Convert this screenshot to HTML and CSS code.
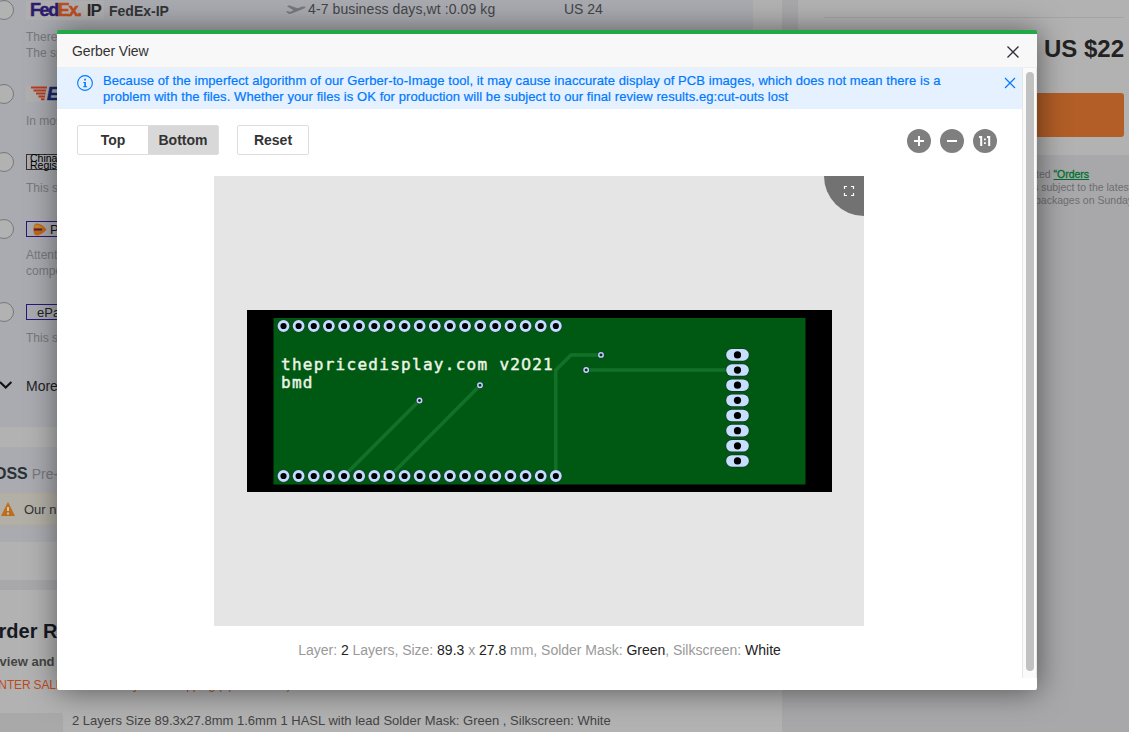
FILE: index.html
```
<!DOCTYPE html>
<html lang="en">
<head>
<meta charset="utf-8">
<title>Gerber View</title>
<link rel="stylesheet" href="styles.css">
</head>
<body>
<div class="page">
  <main class="main">
    <section class="panel shipping">
      <div class="shipping-list">
        <div class="ship ship-fedex">
          <i class="radio"></i>
          <div class="ship-body">
            <div class="ship-head">
              <span class="logo fedex"><b class="fed">Fed</b><b class="ex">Ex</b><b class="dot">.</b><b class="ip">IP</b></span>
              <b class="ship-name">FedEx-IP</b>
              <svg class="plane" width="20" height="12" viewBox="0 0 20 12"><path d="M0 7.500l1.600-.4L4 8l3.500-1.700L1 2.200 3 1.300l8.500 2.900 4.500-1.500c2-.5 4 .1 3.200 1.100-.4.500-2 1.200-3.500 1.700L5 9.700H2.500z"/></svg>
              <span class="days">4-7 business days,wt :0.09 kg</span>
              <span class="price">US 24</span>
            </div>
            <p class="note">There<br>The sp</p>
          </div>
        </div>
        <div class="ship ship-ems">
          <i class="radio"></i>
          <div class="ship-body">
            <div class="ship-head"><span class="logo ems"><svg width="16" height="16" viewBox="0 0 16 16"><path d="M0 1.500h16M2.500 4.500h12.500M5 7.500h9.500M7.500 10.500h6.500M10 13.300h3.500" stroke="#b83d20" stroke-width="2.100"/></svg><b>EMS</b></span></div>
            <p class="note">In most</p>
          </div>
        </div>
        <div class="ship ship-china">
          <i class="radio"></i>
          <div class="ship-body">
            <div class="ship-head"><span class="logo china">China<br>Registered</span></div>
            <p class="note">This s</p>
          </div>
        </div>
        <div class="ship ship-post">
          <i class="radio"></i>
          <div class="ship-body">
            <div class="ship-head"><span class="logo boxed"><svg width="14" height="13" viewBox="0 0 14 13"><path d="M2 1C5-.5 10 2 13.500 6.500 10 11 5 13.500 2 12-.2 9-.2 4 2 1z" fill="#c3651b"/><path d="M2 2c3-1 6 .5 8 3H1z" fill="#cc8429"/><path d="M1 6.500h8" stroke="#4b2830" stroke-width="2"/></svg>PostNL</span></div>
            <p class="note">Attent<br>compe</p>
          </div>
        </div>
        <div class="ship ship-epacket">
          <i class="radio"></i>
          <div class="ship-body">
            <div class="ship-head"><span class="logo boxed epacket">ePacket</span></div>
            <p class="note">This s</p>
          </div>
        </div>
        <div class="more"><svg width="14" height="10" viewBox="0 0 14 10"><path d="M0 1l5.700 5.500L11.400 1" fill="none" stroke="#111" stroke-width="2"/></svg><span>More</span></div>
      </div>
      <div class="ioss">
        <div class="ioss-title"><b>OSS</b> Pre-</div>
        <div class="ioss-alert"><svg width="14" height="14" viewBox="0 0 14 14"><path d="M7 0l7 14H0z" fill="#bd6d1c"/><path d="M7 5v4M7 10.500v2" stroke="#c9c4b5" stroke-width="2"/></svg><span>Our n</span></div>
      </div>
    </section>
    <section class="panel review">
      <h2>Order R</h2>
      <p class="review-sub">Review and</p>
      <p class="sale"><span>WINTER SALE</span><span>&nbsp; C- 2021 Only Free Shipping (up to $20.00)</span></p>
      <div class="item"><i class="thumb"></i><span>2 Layers Size 89.3x27.8mm 1.6mm 1 HASL with lead Solder Mask: Green , Silkscreen: White</span></div>
    </section>
  </main>
  <aside class="aside">
    <div class="summary">
      <div class="total">US $22</div>
      <div class="pay"></div>
    </div>
    <div class="terms"><p>ted <a>“Orders</a></p><p class="t2">s subject to the latest</p><p class="t3">packages on Sunday</p></div>
  </aside>
</div>

<div class="modal">
  <header class="modal-head">
    <span>Gerber View</span>
    <svg width="12" height="12" viewBox="0 0 12 12"><path d="M.5.5l11 11M11.500.5l-11 11" stroke="#303038" stroke-width="1.300"/></svg>
  </header>
  <div class="modal-body">
    <div class="content">
      <div class="notice">
        <svg class="info" width="16" height="16" viewBox="0 0 16 16"><circle cx="8" cy="8" r="7.400" fill="none" stroke="#0078ff" stroke-width="1.100"/><path d="M7.200 3.800h1.700v1.700H7.200zM6.300 7h2.600v4.200h1.200v1H6.200v-1h1.100V8h-1z" fill="#0078ff"/></svg>
        <p>Because of the imperfect algorithm of our Gerber-to-Image tool, it may cause inaccurate display of PCB images, which does not mean there is a<br>problem with the files. Whether your files is OK for production will be subject to our final review results.eg:cut-outs lost</p>
        <svg class="notice-close" width="12" height="12" viewBox="0 0 12 12"><path d="M1 1l10 10M11 1L1 11" stroke="#0078ff" stroke-width="1.200"/></svg>
      </div>
      <div class="toolbar">
        <div class="tabs"><span class="tab">Top</span><span class="tab active">Bottom</span></div>
        <span class="reset">Reset</span>
        <div class="zooms">
          <i><svg width="24" height="24"><path d="M12 7v10M7 12h10" stroke="#fff" stroke-width="2"/></svg></i>
          <i><svg width="24" height="24"><path d="M7 12h10" stroke="#fff" stroke-width="2"/></svg></i>
          <i><svg width="24" height="24"><path d="M6 8h2.200v9M14 8h2.200v9" fill="none" stroke="#fff" stroke-width="2"/><path d="M11 9.500h1.800v1.700H11zM11 13.300h1.800V15H11z" fill="#fff"/></svg></i>
        </div>
      </div>
      <div class="viewer">
        <svg class="board" width="585" height="182" viewBox="247 310 585 182">
          <defs>
            <g id="pad"><circle r="6.300" fill="#252a48"/><circle r="4.500" fill="#000" stroke="#c2dcfb" stroke-width="2.800"/></g>
            <g id="oval"><rect x="-11.900" y="-6.500" width="23.800" height="13" rx="6.400" fill="#183426"/><rect x="-11.300" y="-5.800" width="22.600" height="11.600" rx="5.600" fill="#c5dffc"/><circle r="3.600" fill="#000"/></g>
            <g id="via"><circle r="3.400" fill="#252f58"/><circle r="2.200" fill="#063419" stroke="#bed5f3" stroke-width="1.500"/></g>
          </defs>
          <rect x="247" y="310" width="585" height="182" fill="#000"/>
          <rect x="273.500" y="318" width="532" height="166.500" fill="#005912"/>
          <path d="M419.500 400.500L346 474M480 385.500L392 474M601 355h-30l-15.300 15.300V475M586 370h151" fill="none" stroke="#127129" stroke-width="3.600"/>
          <g id="pads"></g>
          <g id="silk" class="silk"></g>
        </svg>
        <span class="fullscreen"><svg width="12" height="12" viewBox="0 0 12 12"><path d="M1.500 4V1.500H4M8 1.500h2.500V4M10.500 8v2.500H8M4 10.500H1.500V8" fill="none" stroke="#fff" stroke-width="1.200"/></svg></span>
      </div>
      <p class="spec">Layer: <b>2</b> Layers, Size: <b>89.3</b> x <b>27.8</b> mm, Solder Mask: <b>Green</b>, Silkscreen: <b>White</b></p>
    </div>
    <div class="scroll"><i></i></div>
  </div>
</div>
<script src="board.js"></script>
</body>
</html>
```
FILE: board.js
```
const NS = "http://www.w3.org/2000/svg";
const pads = document.getElementById("pads");
function place(id, x, y) {
  const u = document.createElementNS(NS, "use");
  u.setAttribute("href", "#" + id);
  u.setAttribute("x", x);
  u.setAttribute("y", y);
  pads.appendChild(u);
}
for (let i = 0; i < 19; i++) {
  place("pad", 283.5 + i * 15.13, 326);
  place("pad", 283.5 + i * 15.13, 476);
}
for (let i = 0; i < 8; i++) place("oval", 737.5, 354.9 + i * 15.15);
[[419.5, 400.5], [480, 385.3], [601, 354.9], [586.2, 370]].forEach(p => place("via", p[0], p[1]));

// Silkscreen lettering sits on a fixed pitch; zeros use the open form.
function silk(line, x, y) {
  const t = document.createElementNS(NS, "text");
  t.setAttribute("y", y);
  [...line].forEach((c, i) => {
    const s = document.createElementNS(NS, "tspan");
    s.setAttribute("x", x + i * 10.92);
    if (c === "0") s.setAttribute("class", "open");
    s.textContent = c;
    t.appendChild(s);
  });
  document.getElementById("silk").appendChild(t);
}
silk("thepricedisplay.com v2021", 285.8, 369.8);
silk("bmd", 285.8, 387.5);
```
FILE: styles.css
```
* { box-sizing: border-box; }
body { margin: 0; width: 1129px; height: 732px; overflow: hidden; position: relative; font-family: "Liberation Sans", Arial, sans-serif; background: #a8a8aa; white-space: nowrap; }
p, h2 { margin: 0; }
i { font-style: normal; }
svg { display: block; flex: none; }

.page { display: flex; gap: 16px; height: 732px; }
.main { width: 782px; flex: none; display: flex; flex-direction: column; gap: 10px; }
.panel { background: #b2b2b2; }
.shipping { height: 580px; display: flex; flex-direction: column; gap: 20px; padding-right: 29px; overflow: hidden; }
.shipping-list { height: 427px; background: #a9abb0; }
.shipping-list, .ioss { margin-right: 0; }
.ship { display: flex; gap: 12px; height: 84px; }
.radio { width: 20px; height: 20px; flex: none; border: 1px solid #77787a; border-radius: 50%; background: #b2b2b2; margin-left: -6px; }
.ship-ems { height: 68px; }
.ship-china { height: 67px; }
.ship-post { height: 83px; }
.ship-epacket { height: 71px; }
.ship-body { flex: 1; }
.ship-head { display: flex; height: 20px; align-items: center; color: #444547; font-size: 14px; }
.ship-name { font-size: 14px; line-height: 16px; margin: 2px 0 0 5px; width: 177px; color: #333436; }
.days { margin: -2px 0 0 2px; width: 256px; letter-spacing: 0.1px; }
.price { margin-top: -2px; }
.plane { fill: #77787a; }
.logo { display: flex; align-items: center; height: 16px; color: #111; flex: none; }
.fedex { width: 78px; height: 19px; padding-left: 4px; background: #afafb0; font-size: 18px; line-height: 19px; letter-spacing: -1.4px; -webkit-text-stroke: 0.5px; }
.fed { color: #2d1c6d; }
.ex, .dot { color: #bd4d1e; }
.ip { margin-left: 6px; color: #29292a; font-size: 17px; letter-spacing: -0.8px; -webkit-text-stroke: 0; }
.ems { width: 60px; padding-left: 5px; background: #afafb0; color: #152870; font-size: 18px; font-style: italic; -webkit-text-stroke: 0.6px; }
.china { width: 60px; padding-left: 3px; border: 1px solid #333; font-size: 10.5px; line-height: 7px; color: #000; }
.boxed { width: 60px; border: 1px solid #28187c; padding-left: 6px; gap: 3px; font-size: 13px; }
.epacket { padding-left: 10px; color: #222; }
.note { font-size: 12px; line-height: 16px; color: #77787a; padding-top: 8px; }
.ship-fedex .note, .ship-ems .note { padding-top: 9px; }
.more { display: flex; gap: 12px; align-items: center; height: 26px; font-size: 14px; color: #222; }
.ioss { height: 95px; background: #a9abb0; }
.ioss-title { height: 46px; padding-top: 18px; margin-left: -6px; font-size: 14px; color: #77787a; }
.ioss-title b { font-size: 16px; color: #293136; }
.ioss-alert { height: 32px; display: flex; align-items: center; gap: 9px; padding-left: 1px; font-size: 13px; color: #333; background: #b2afa6; border: solid #b7ac95; border-width: 1px 0; }
.review { flex: 1; overflow: hidden; color: #444; }
.review h2 { margin: 30px 0 0 -17px; font-size: 20px; line-height: 23px; color: #151923; }
.review-sub { font-size: 13px; line-height: 16px; font-weight: bold; margin: 11px 0 0 -17px; }
.sale { display: flex; font-size: 12px; line-height: 16px; margin: 7px 0 0 -16px; letter-spacing: -0.15px; color: #bc4b1c; }
.item { display: flex; gap: 9px; margin-top: 20px; font-size: 13px; line-height: 15px; letter-spacing: 0.01px; }
.thumb { width: 63px; height: 60px; background: #a9a9aa; border-radius: 0 3px 0 0; }

.aside { flex: 1; overflow: hidden; }
.summary { height: 155px; background: #b2b2b2; padding: 17px 5px 0 26px; }
.total { border-top: 1px solid #a4a4a4; text-align: right; font-size: 24px; font-weight: bold; line-height: 27px; height: 76px; padding-top: 17px; color: #222; }
.pay { height: 44px; border-radius: 3px; background: #b25e26; }
.terms { padding: 13px 0 0 238px; font-size: 10.5px; line-height: 13px; color: #6d6d70; }
.terms a { color: #00702f; text-decoration: underline; -webkit-text-stroke: 0.3px; }
.terms .t2 { margin-left: -3px; }
.terms .t3 { margin-left: -1px; line-height: 12px; }

.modal { position: absolute; left: 57px; top: 30px; width: 980px; height: 660px; background: #fff; border-top: 4px solid #22a845; border-radius: 2px; box-shadow: 1px 1px 30px rgba(0,0,0,.5); display: flex; flex-direction: column; }
.modal-head { height: 34px; background: #f8f8f8; border-bottom: 1px solid #eee; display: flex; justify-content: space-between; align-items: center; padding: 0 18px 0 15px; font-size: 14px; letter-spacing: -0.1px; color: #333; }
.modal-head svg { margin-top: 3px; }
.modal-body { display: flex; height: 610px; }
.content { width: 965px; }
.notice { height: 41px; background: #e5f1fe; display: flex; padding: 4px 6px 0 20px; color: #0078ff; font-size: 13px; line-height: 16px; }
.notice p { margin: 1px 0 0 10px; flex: 1; letter-spacing: 0.072px; -webkit-text-stroke: 0.2px; }
.info { margin-top: 3px; }
.notice-close { margin-top: 5px; }
.toolbar { display: flex; height: 30px; margin: 16px 25px 0 20px; font-size: 14px; font-weight: bold; color: #333; line-height: 28px; text-align: center; }
.tabs { display: flex; width: 142px; border: 1px solid #ddd; border-radius: 2px; }
.tab { width: 70px; }
.active { background: #d8d8d8; }
.reset { width: 72px; margin-left: 18px; border: 1px solid #ddd; border-radius: 2px; }
.zooms { display: flex; gap: 9px; margin: 4px 0 0 auto; }
.zooms i { width: 24px; height: 24px; border-radius: 50%; background: #7f7f7f; }
.viewer { position: relative; width: 650px; height: 450px; margin: 21px 0 0 157px; padding: 134px 0 0 33px; background: #e5e5e5; }
.silk { font: 16px "DejaVu Sans Mono", monospace; fill: #edf4e8; stroke: #edf4e8; stroke-width: 0.45px; text-anchor: middle; }
.open { font-family: "DejaVu Sans", sans-serif; }
.fullscreen { position: absolute; right: 0; top: 0; width: 40px; height: 40px; border-radius: 0 0 0 40px; background: #727272; padding: 9px 0 0 19px; }
.spec { text-align: center; font-size: 14px; line-height: 16px; letter-spacing: -0.02px; color: #999; margin-top: 16px; }
.spec b { font-weight: normal; color: #222; }
.scroll { width: 15px; background: #fafafa; border: solid #e7e7e7; border-width: 0 1px; padding: 4px 2px 0 3px; }
.scroll i { display: block; height: 599px; width: 8px; border-radius: 4px; background: #c1c1c1; }
```
